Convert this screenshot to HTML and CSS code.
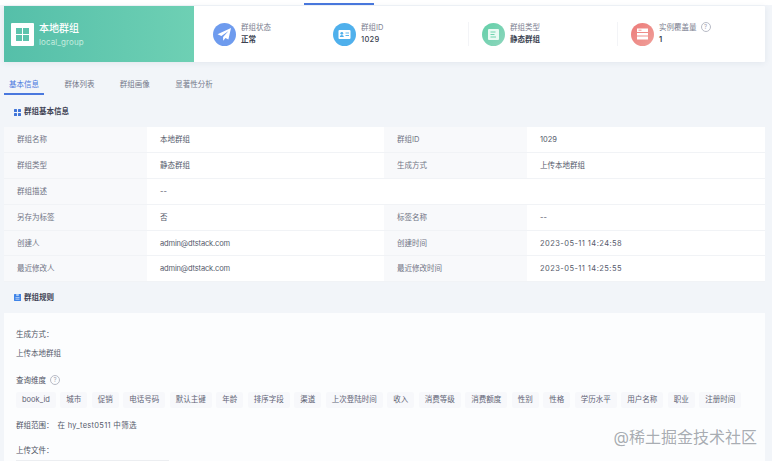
FILE: index.html
```html
<!DOCTYPE html>
<html lang="zh-CN">
<head>
    <meta charset="UTF-8">
    <title>群组详情</title>
    <link rel="stylesheet" href="styles.css">
</head>
<body>
    <div class="topbar"><span class="topbar-line"></span></div>

    <div class="summary">
        <div class="summary-name">
            <svg class="name-icon" viewBox="0 0 23 23">
                <rect width="23" height="23" rx="1" fill="#fff"/>
                <rect x="5" y="5" width="6" height="6" fill="#5cc4ad"/>
                <rect x="12" y="5" width="6" height="6" fill="#5cc4ad"/>
                <rect x="5" y="12" width="6" height="6" fill="#5cc4ad"/>
                <rect x="12" y="12" width="6" height="6" fill="#5cc4ad"/>
            </svg>
            <div>
                <div class="name-title">本地群组</div>
                <div class="name-sub">local_group</div>
            </div>
        </div>
        <div class="stats">
            <div class="stat">
                <svg class="stat-icon" viewBox="0 0 23 23">
                    <circle cx="11.5" cy="11.5" r="11.5" fill="#6e9bee"/>
                    <path d="M18 5 4.5 11.2l3.9 1.9L15.5 8l-5.4 6v3.8l2.4-2.7 2.9 1.4z" fill="#fff"/>
                </svg>
                <div>
                    <div class="stat-label">群组状态</div>
                    <div class="stat-value">正常</div>
                </div>
            </div>
            <div class="stat">
                <svg class="stat-icon" viewBox="0 0 23 23">
                    <circle cx="11.5" cy="11.5" r="11.5" fill="#4fb0ec"/>
                    <rect x="5.5" y="7" width="12" height="9" rx="1" fill="#fff"/>
                    <circle cx="8.8" cy="10.3" r="1.4" fill="#4fb0ec"/>
                    <path d="M6.8 14c0-1.3 1-2 2-2s2 .7 2 2z" fill="#4fb0ec"/>
                    <path d="M12.5 10h3.5M12.5 12.5h3.5" stroke="#4fb0ec" stroke-width=".9"/>
                </svg>
                <div>
                    <div class="stat-label">群组ID</div>
                    <div class="stat-value stat-number">1029</div>
                </div>
            </div>
            <div class="stat stat-split">
                <svg class="stat-icon" viewBox="0 0 23 23">
                    <defs>
                        <linearGradient id="greenFill" x1="0" y1="0" x2="1" y2="1">
                            <stop offset="0" stop-color="#62cfa8"/>
                            <stop offset="1" stop-color="#8ed6bd"/>
                        </linearGradient>
                    </defs>
                    <circle cx="11.5" cy="11.5" r="11.5" fill="url(#greenFill)"/>
                    <rect x="6" y="6" width="11" height="11" rx="1" fill="#eafaf3"/>
                    <path d="M8.5 9h5M8.5 11.5h4M8.5 14h5.5" stroke="#62cfa8" stroke-width=".9"/>
                </svg>
                <div>
                    <div class="stat-label">群组类型</div>
                    <div class="stat-value">静态群组</div>
                </div>
            </div>
            <div class="stat stat-split">
                <svg class="stat-icon" viewBox="0 0 23 23">
                    <defs>
                        <linearGradient id="redFill" x1="0" y1="0" x2="1" y2="1">
                            <stop offset="0" stop-color="#ec7a78"/>
                            <stop offset="1" stop-color="#f0a09a"/>
                        </linearGradient>
                    </defs>
                    <circle cx="11.5" cy="11.5" r="11.5" fill="url(#redFill)"/>
                    <path d="M6 5.5h11v3.6H6zM6 10h11v2.6H6zM6 13.6h11v3H6z" fill="#fff"/>
                    <path d="M7.5 7.2h3" stroke="#ec7a78" stroke-width=".8"/>
                </svg>
                <div>
                    <div class="stat-label">实例覆盖量 <span class="help">?</span></div>
                    <div class="stat-value">1</div>
                </div>
            </div>
        </div>
    </div>

    <div class="tabs">
        <span class="tab tab-active">基本信息</span>
        <span class="tab">群体列表</span>
        <span class="tab">群组画像</span>
        <span class="tab">显著性分析</span>
    </div>

    <div class="section-title">
        <svg class="section-icon" viewBox="0 0 7 7" fill="#3f74d8">
            <rect width="3" height="3" rx=".5"/>
            <rect x="4" width="3" height="3" rx=".5"/>
            <rect y="4" width="3" height="3" rx=".5"/>
            <rect x="4" y="4" width="3" height="3" rx=".5"/>
        </svg>
        群组基本信息
    </div>

    <div class="info-table">
        <div class="cell-label">群组名称</div><div class="cell-value">本地群组</div>
        <div class="cell-label">群组ID</div><div class="cell-value">1029</div>
        <div class="cell-label">群组类型</div><div class="cell-value">静态群组</div>
        <div class="cell-label">生成方式</div><div class="cell-value">上传本地群组</div>
        <div class="cell-label">群组描述</div><div class="cell-value cell-wide">--</div>
        <div class="cell-label">另存为标签</div><div class="cell-value">否</div>
        <div class="cell-label">标签名称</div><div class="cell-value">--</div>
        <div class="cell-label">创建人</div><div class="cell-value cell-email">admin@dtstack.com</div>
        <div class="cell-label">创建时间</div><div class="cell-value cell-date">2023-05-11 14:24:58</div>
        <div class="cell-label">最近修改人</div><div class="cell-value cell-email">admin@dtstack.com</div>
        <div class="cell-label">最近修改时间</div><div class="cell-value cell-date">2023-05-11 14:25:55</div>
    </div>

    <div class="section-title section-rules">
        <svg class="section-icon" viewBox="0 0 7 7">
            <path d="M0 .5C0 .2.2 0 .5 0H7v7H.5C.2 7 0 6.8 0 6.5z" fill="#3f84e8"/>
            <path d="M1.5 3.6h4M1.5 5.2h4" stroke="#fff" stroke-width=".6"/>
            <path d="M2.2 0h2.6v2H2.2z" fill="#a9cbf6"/>
        </svg>
        群组规则
    </div>

    <div class="rules">
        <div class="rule-label">生成方式：</div>
        <div class="rule-text">上传本地群组</div>
        <div class="rule-label rule-dims">查询维度 <span class="help">?</span></div>
        <div class="tags">
            <span class="tag">book_id</span>
            <span class="tag">城市</span>
            <span class="tag">促销</span>
            <span class="tag">电话号码</span>
            <span class="tag">默认主键</span>
            <span class="tag">年龄</span>
            <span class="tag">排序字段</span>
            <span class="tag">渠道</span>
            <span class="tag">上次登陆时间</span>
            <span class="tag">收入</span>
            <span class="tag">消费等级</span>
            <span class="tag">消费额度</span>
            <span class="tag">性别</span>
            <span class="tag">性格</span>
            <span class="tag">学历水平</span>
            <span class="tag">用户名称</span>
            <span class="tag">职业</span>
            <span class="tag">注册时间</span>
        </div>
        <div class="rule-scope"><span class="rule-label">群组范围：</span><span class="rule-text">在 hy_test0511 中筛选</span></div>
        <div class="rule-label rule-file">上传文件：</div>
        <div class="file-bar"></div>
    </div>

    <div class="watermark">@稀土掘金技术社区</div>
</body>
</html>
```

FILE: styles.css
```css
html, body {
    margin: 0;
    height: 461px;
    overflow: hidden;
}
body {
    position: relative;
    background-color: #f2f5f9;
    color: #3a3f50;
    font-family: "Inter", "Noto Sans CJK SC", sans-serif;
    font-size: 7.5px;
    line-height: 12px;
}
.topbar {
    height: 5px;
    padding-left: 304px;
    background-color: #fff;
    box-sizing: border-box;
}
.topbar-line {
    display: block;
    width: 70px;
    height: 5px;
    border-bottom: 2px solid #4a78de;
    box-sizing: border-box;
}
.summary {
    display: flex;
    height: 56px;
    margin: 1px 7px 0 4px;
    background-color: #fff;
    border-radius: 1px;
    box-shadow: 0 1px 6px rgba(40,60,100,0.08);
}
.summary-name {
    display: flex;
    align-items: center;
    gap: 5px;
    width: 190px;
    padding-left: 7px;
    box-sizing: border-box;
    background: linear-gradient(90deg, #55bfa9, #6ed0b4);
    color: #fff;
}
.name-icon {
    width: 23px;
    height: 23px;
}
.name-title {
    font-size: 10px;
    line-height: 14px;
    font-weight: 500;
}
.name-sub {
    margin-top: 1px;
    font-size: 8px;
    letter-spacing: 0.1px;
    color: #c4ecdf;
}
.stats {
    display: grid;
    grid-template-columns: 120px 135px 149px 1fr;
    align-items: center;
    padding-left: 19px;
    flex: 1;
}
.stat {
    display: flex;
    align-items: center;
    gap: 5px;
}
.stat-split {
    padding-left: 13px;
    border-left: 1px solid #f3f4f7;
}
.stat-icon {
    width: 23px;
    height: 23px;
}
.stat-label {
    color: #7c8090;
}
.stat-value {
    font-weight: 600;
    color: #3a3f50;
}
.stat-number {
    font-weight: 500;
    letter-spacing: 0.3px;
}
.help {
    display: inline-block;
    width: 8px;
    height: 8px;
    margin-left: 2px;
    border: 1px solid #b8bbc6;
    border-radius: 50%;
    color: #a5a8b5;
    font-size: 6px;
    line-height: 8px;
    text-align: center;
    vertical-align: 1px;
}
.tabs {
    display: flex;
    gap: 15.4px;
    margin: 16px 0 0 4px;
}
.tab {
    padding: 1px 5px 2px;
    color: #74788a;
    border-bottom: 2px solid transparent;
}
.tab-active {
    color: #4a78de;
    border-bottom-color: #4a78de;
}
.section-title {
    display: flex;
    align-items: center;
    gap: 3px;
    height: 12px;
    margin: 11px 0 0 14px;
    font-weight: 600;
    color: #3f4354;
}
.section-icon {
    width: 7px;
    height: 7px;
}
.section-rules {
    margin-top: 9.6px;
}
.info-table {
    display: grid;
    grid-template-columns: 143px 237px 143px 238px;
    grid-auto-rows: 25.9px;
    margin: 9px 7px 0 4px;
    background-color: #fff;
}
.cell-label, .cell-value {
    display: flex;
    align-items: center;
    padding-top: 1px;
    border-bottom: 1px solid #f1f3f6;
    box-sizing: border-box;
}
.cell-label {
    padding-left: 13px;
    background-color: #f8f9fb;
    color: #707484;
}
.cell-value {
    padding-left: 13px;
    color: #555a6b;
}
.cell-date {
    letter-spacing: 0.45px;
}
.cell-email {
    letter-spacing: -0.15px;
}
.cell-wide {
    grid-column: span 3;
}
.rules {
    height: 148px;
    margin: 9px 7px 0 4px;
    padding: 16px 12px 0 12px;
    background-color: #fcfdfe;
}
.rule-label {
    color: #4f5364;
}
.rule-text {
    margin-top: 7px;
    color: #555a6b;
}
.rule-dims {
    margin-top: 15px;
}
.tags {
    display: flex;
    gap: 4.5px;
    margin-top: 5px;
}
.tag {
    padding: 2px 6px;
    background-color: #f7f8fb;
    border-radius: 2px;
    color: #5f6375;
    white-space: nowrap;
}
.rule-scope {
    display: flex;
    gap: 4px;
    margin-top: 12px;
}
.rule-scope .rule-text {
    margin-top: 0;
    letter-spacing: 0.3px;
}
.rule-file {
    margin-top: 13px;
}
.file-bar {
    width: 153px;
    height: 4px;
    margin-top: 3px;
    background-color: #eceef1;
}
.watermark {
    position: absolute;
    right: 15px;
    top: 427px;
    font-size: 16px;
    line-height: 20px;
    color: rgba(120,125,135,0.65);
}
```
